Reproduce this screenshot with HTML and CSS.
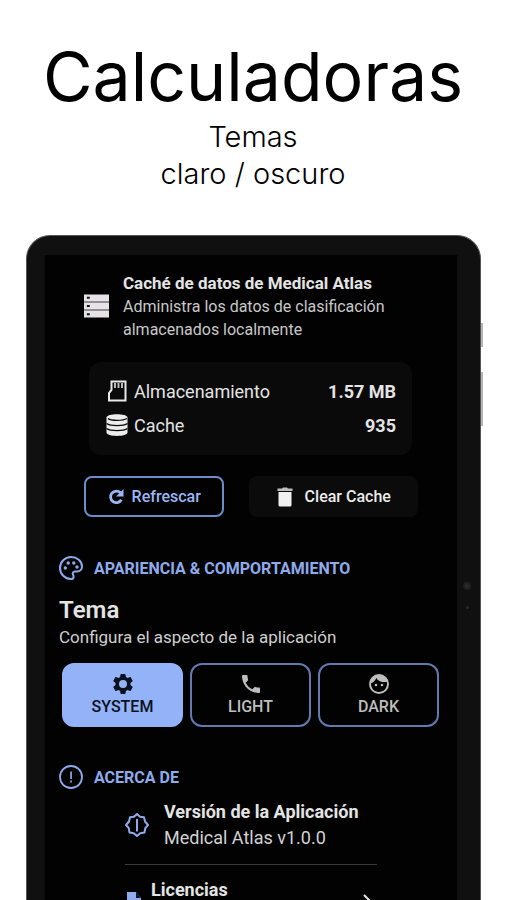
FILE: index.html
```html
<!DOCTYPE html>
<html lang="es">
<head>
<meta charset="utf-8">
<meta name="viewport" content="width=device-width, initial-scale=1">
<title>Calculadoras</title>
<link rel="stylesheet" href="styles.css">
</head>
<body>
<header class="hero">
  <h1 class="hero-title">Calculadoras</h1>
  <p class="hero-sub">Temas<br>claro / oscuro</p>
</header>
<div class="device">
  <span class="side-key side-key-power"></span>
  <span class="side-key side-key-volume"></span>
  <span class="camera"></span>
  <span class="sensor"></span>
  <main class="screen">
    <section class="cache">
      <div class="cache-head">
        <svg class="icon-storage" viewBox="0 0 26 24" aria-hidden="true">
          <path fill="#77747a" d="M0 6h26v13H0z"/>
          <path fill="#e6e2e8" d="M0 0h26v7H0zM0 8.500h26v7H0zM0 17h26v7H0z"/>
          <path fill="#111" d="M3 2.500h3v2H3zM3 11h3v2H3zM3 19.500h3v2H3z"/>
        </svg>
        <div>
          <h2 class="cache-title">Caché de datos de Medical Atlas</h2>
          <p class="cache-text">Administra los datos de clasificación almacenados localmente</p>
        </div>
      </div>
      <dl class="stats">
        <div class="stat">
          <dt>
            <svg class="icon-stat" viewBox="0 0 24 24" aria-hidden="true"><path fill="none" stroke="#e8e8e8" stroke-width="2" d="M8 2.500h12.500v19H4V14l2.500-3V2.500z"/><path fill="#b8b8b8" d="M9 4h2v5H9zM12.500 4h2v5h-2zM16 4h2v5h-2z"/></svg>
            Almacenamiento
          </dt>
          <dd>1.57 MB</dd>
        </div>
        <div class="stat">
          <dt>
            <svg class="icon-stat" viewBox="0 0 24 24" aria-hidden="true">
              <path fill="#ececec" d="M1.500 4.500c0-4.500 21-4.500 21 0v15c0 4.500-21 4.500-21 0z"/>
              <path fill="none" stroke="#0a0a0a" stroke-width="1.300" d="M3 5.500c3 2.500 15 2.500 19 0M1.500 10.500c4 2.800 17 2.800 21 0M1.500 15.500c4 2.800 17 2.800 21 0"/>
            </svg>
            Cache
          </dt>
          <dd>935</dd>
        </div>
      </dl>
      <div class="actions">
        <button class="btn btn-outline" type="button">
          <svg class="icon-refresh" viewBox="0 0 16 16" aria-hidden="true"><path fill="none" stroke="currentColor" stroke-width="2.800" d="M12.500 3.800A5.800 5.800 0 1 0 13.400 10.800"/><path fill="currentColor" d="M15.500 0v7.500H8z"/></svg>
          Refrescar
        </button>
        <button class="btn btn-filled" type="button">
          <svg class="icon-trash" viewBox="0 0 16 20" aria-hidden="true"><path fill="#f0f0f0" d="M1.500 5h13v13a1.500 1.500 0 0 1-1.500 1.500H3A1.500 1.500 0 0 1 1.500 18z"/><path fill="#bdbdbd" d="M.5 1.500H5l1-1h4l1 1h4.500V4H.5z"/></svg>
          Clear Cache
        </button>
      </div>
    </section>

    <section class="appearance">
      <h2 class="section-title">
        <svg class="icon-section" viewBox="0 0 24 24" aria-hidden="true">
          <path fill="none" stroke="currentColor" stroke-width="2" d="M12 1C5.900 1 1 5.900 1 12s4.900 11 11 11c1.600 0 2.600-1.200 2.600-2.600 0-.8-.3-1.300-.6-1.800-.8-1.500.2-3.200 1.900-3.200H18c3 0 5-2.200 5-5C23 5 18 1 12 1z"/>
          <g fill="currentColor"><circle cx="6.300" cy="12" r="1.700"/><circle cx="9.200" cy="7" r="1.700"/><circle cx="14.800" cy="7" r="1.700"/><circle cx="18" cy="11" r="1.700"/></g>
        </svg>
        APARIENCIA &amp; COMPORTAMIENTO
      </h2>
      <h3 class="theme-title">Tema</h3>
      <p class="theme-text">Configura el aspecto de la aplicación</p>
      <div class="themes">
        <button class="theme theme-active" type="button" aria-pressed="true">
          <svg class="icon-theme" viewBox="2 2 20 20" aria-hidden="true"><path fill="currentColor" d="M19.430 12.980c.04-.32.07-.64.07-.98s-.03-.66-.07-.98l2.110-1.650c.19-.15.24-.42.12-.64l-2-3.460c-.12-.22-.39-.3-.61-.22l-2.490 1c-.52-.4-1.080-.73-1.690-.98l-.38-2.650A.49.49 0 0 0 14 2h-4a.49.49 0 0 0-.49.42l-.38 2.650c-.61.25-1.170.59-1.690.98l-2.490-1c-.23-.09-.49 0-.61.22l-2 3.460c-.13.22-.07.49.12.64l2.110 1.650c-.04.32-.07.65-.07.98s.03.66.07.98l-2.110 1.650c-.19.15-.24.42-.12.64l2 3.460c.12.22.39.3.61.22l2.490-1c.52.4 1.080.73 1.690.98l.38 2.650c.03.24.24.42.49.42h4c.25 0 .46-.18.49-.42l.38-2.650c.61-.25 1.170-.59 1.690-.98l2.490 1c.23.09.49 0 .61-.22l2-3.460c.12-.22.07-.49-.12-.64zM12 16a4 4 0 1 1 0-8 4 4 0 0 1 0 8z"/></svg>
          SYSTEM
        </button>
        <button class="theme" type="button" aria-pressed="false">
          <svg class="icon-theme" viewBox="2 2 20 20" aria-hidden="true"><path fill="currentColor" d="M20 15.500c-1.250 0-2.450-.2-3.570-.57a1.020 1.020 0 0 0-1.020.24l-2.200 2.200a15.070 15.070 0 0 1-6.590-6.580l2.200-2.210c.28-.27.36-.66.25-1.010A11.360 11.360 0 0 1 8.500 4c0-.55-.45-1-1-1H4c-.55 0-1 .45-1 1 0 9.390 7.610 17 17 17 .55 0 1-.45 1-1v-3.500c0-.55-.45-1-1-1z"/></svg>
          LIGHT
        </button>
        <button class="theme" type="button" aria-pressed="false">
          <svg class="icon-theme" viewBox="2 2 20 20" aria-hidden="true"><path fill="currentColor" d="M9 11.750a1.250 1.250 0 1 0 0 2.500 1.250 1.250 0 0 0 0-2.500zm6 0a1.250 1.250 0 1 0 0 2.500 1.250 1.250 0 0 0 0-2.500zM12 2a10 10 0 1 0 0 20 10 10 0 0 0 0-20zm0 18c-4.410 0-8-3.590-8-8 0-.29.02-.58.05-.86 2.360-1.050 4.230-2.980 5.210-5.370a9.970 9.970 0 0 0 10.410 3.970c.21.710.33 1.470.33 2.260 0 4.410-3.590 8-8 8z"/><path fill="currentColor" d="M4.050 11.140c2.360-1.050 4.230-2.980 5.210-5.370a9.970 9.970 0 0 0 10.410 3.970L17.500 5 12 3 6 5z"/></svg>
          DARK
        </button>
      </div>
    </section>

    <section class="about">
      <h2 class="section-title">
        <svg class="icon-section" viewBox="0 0 24 24" aria-hidden="true"><circle cx="12" cy="12" r="11" fill="none" stroke="currentColor" stroke-width="1.800"/><path fill="currentColor" d="M11.200 6.500h1.700v7.500h-1.700zM11.200 15.500h1.700v2h-1.700z"/></svg>
        ACERCA DE
      </h2>
      <div class="about-list">
        <div class="about-row">
          <svg class="icon-badge" viewBox="0 0 24 24" aria-hidden="true"><path fill="none" stroke="currentColor" stroke-width="2" stroke-linejoin="round" d="M12 1 15 3.700 19 4.200 20 8.500 23 12 20.300 15.200 19.500 19.500 15.200 20.300 12 23 8.800 20.300 4.500 19.500 3.800 15.200 1 12 4 8.500 5 4.200 9 3.700z"/><path fill="currentColor" d="M11 6h2v12.500h-2z"/></svg>
          <div>
            <h3 class="about-title">Versión de la Aplicación</h3>
            <p class="about-text">Medical Atlas v1.0.0</p>
          </div>
        </div>
        <a class="about-row about-link" href="#licencias">
          <svg class="icon-doc" viewBox="0 0 16 20" aria-hidden="true"><path fill="currentColor" d="M2 0h9l5 6v14H2z"/><path fill="#0b1530" d="M11 0v6h5z"/></svg>
          <span class="about-title">Licencias</span>
          <svg class="icon-chevron" viewBox="0 0 10 16" aria-hidden="true"><path fill="none" stroke="currentColor" stroke-width="2" d="M1 1l7 7-7 7"/></svg>
        </a>
      </div>
    </section>
  </main>
</div>
</body>
</html>
```
FILE: styles.css
```css
* { box-sizing: border-box; }

body {
  margin: 0;
  height: 100vh;
  display: flex;
  flex-direction: column;
  overflow: hidden;
  background: #fff;
  color: #e4e4e4;
  font-family: Roboto, "Liberation Sans", sans-serif;
}

h1, h2, h3, p, dl, dd { margin: 0; }

button { font: inherit; cursor: pointer; }

svg { flex: none; display: block; }

.hero {
  padding-top: 35px;
  color: #000;
  text-align: center;
  font-family: Inter, "Liberation Sans", sans-serif;
  font-weight: 300;
}

.hero-title {
  font-size: 68px;
  line-height: 82px;
  font-weight: 400;
}

.hero-sub {
  padding-top: 1px;
  font-size: 29px;
  line-height: 37px;
}

.device {
  position: relative;
  flex: 1;
  min-height: 0;
  display: flex;
  margin: 43px 25px 0 26px;
  padding: 19px 23px 0 18px;
  border: 1px solid #555;
  border-bottom: 0;
  border-radius: 24px 24px 0 0;
  background: #101010;
}

.side-key {
  position: absolute;
  right: -3px;
  width: 2px;
  background: #b4b4b4;
}

.side-key-power { top: 87px; height: 24px; }
.side-key-volume { top: 136px; height: 54px; }

.camera, .sensor {
  position: absolute;
  border-radius: 50%;
  background: #2a2a2a;
}

.camera { top: 346px; right: 9px; width: 8px; height: 8px; border: 2px solid #202020; }
.sensor { top: 370px; right: 11px; width: 3px; height: 3px; }

.screen {
  flex: 1;
  min-width: 0;
  overflow: hidden;
  padding: 16px 18px 0 14px;
  background: #020202;
}

.cache { padding: 0 21px 0 25px; }

.cache-head {
  display: flex;
  align-items: center;
  gap: 14px;
}

.icon-storage { width: 25px; height: 24px; }

.cache-title {
  font-size: 17px;
  line-height: 24px;
  font-weight: 700;
}

.cache-text {
  font-size: 16px;
  line-height: 23px;
  color: #c8c8c8;
}

.stats {
  margin: 21px 6px 0 5px;
  padding: 12px 16px 13px;
  border-radius: 12px;
  background: #0a0a0a;
}

.stat {
  display: flex;
  justify-content: space-between;
  align-items: center;
  height: 34px;
  font-size: 18px;
}

.stat dt {
  display: flex;
  align-items: center;
  gap: 5px;
}

.stat dd { font-weight: 700; }

.icon-stat { width: 24px; height: 24px; }

.actions {
  display: grid;
  grid-template-columns: 5fr 6fr;
  gap: 25px;
  margin-top: 21px;
}

.btn {
  display: flex;
  align-items: center;
  justify-content: center;
  height: 41px;
  padding: 0;
  border: 0;
  border-radius: 8px;
  font-size: 16px;
  font-weight: 500;
}

.btn-outline {
  gap: 8px;
  border: 2px solid #6d8cc8;
  background: transparent;
  color: #9ab6f5;
}

.btn-filled {
  gap: 12px;
  background: #0b0b0b;
  color: #ececec;
}

.icon-refresh { width: 16px; height: 16px; }
.icon-trash { width: 16px; height: 20px; }

.section-title {
  display: flex;
  align-items: center;
  gap: 11px;
  height: 26px;
  font-size: 16px;
  font-weight: 700;
  color: #8fabec;
}

.icon-section { width: 24px; height: 24px; }

.appearance { margin-top: 38px; }

.theme-title {
  margin-top: 14px;
  font-size: 24px;
  line-height: 30px;
  font-weight: 600;
}

.theme-text {
  font-size: 17px;
  line-height: 24px;
  color: #cfcfcf;
}

.themes {
  display: flex;
  gap: 7px;
  margin: 14px 0 0 3px;
}

.theme {
  flex: 1;
  display: flex;
  flex-direction: column;
  align-items: center;
  justify-content: center;
  gap: 3px;
  height: 64px;
  padding: 0;
  border: 2px solid #6478b0;
  border-radius: 12px;
  background: transparent;
  color: #bdbdbd;
  font-size: 16px;
  line-height: 20px;
  font-weight: 500;
}

.theme-active {
  border-color: #93b2f7;
  background: #93b2f7;
  color: #0c1120;
}

.icon-theme { width: 20px; height: 20px; }

.about { margin-top: 37px; }

.about-list { margin: 8px 62px 0 66px; }

.about-row {
  display: flex;
  align-items: center;
  gap: 15px;
  color: inherit;
  text-decoration: none;
}

.about-title {
  font-size: 18px;
  line-height: 27px;
  font-weight: 700;
}

.about-text {
  font-size: 18px;
  line-height: 26px;
  color: #d2d2d2;
}

.about-link {
  align-items: flex-start;
  gap: 10px;
  margin-top: 13px;
  padding-top: 11px;
  border-top: 1px solid #3a3a3a;
}

.icon-badge { width: 24px; height: 24px; color: #8fabec; }
.icon-doc { width: 16px; height: 20px; margin-top: 16px; color: #8fabec; }
.icon-chevron { width: 10px; height: 16px; margin: 18px 4px 0 auto; }
```
